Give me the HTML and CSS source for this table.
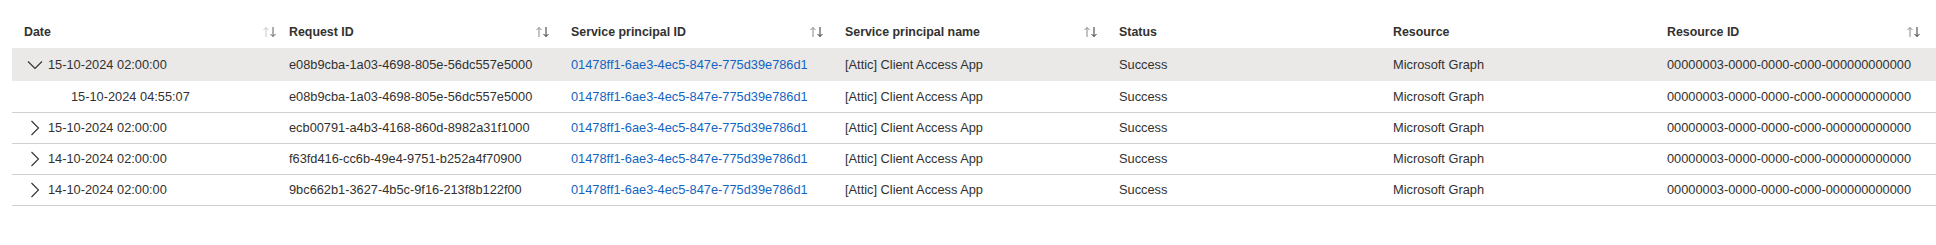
FILE: index.html
```html
<!DOCTYPE html>
<html lang="en">
<head>
    <meta charset="UTF-8">
    <title>Sign-in logs</title>
    <link rel="stylesheet" href="styles.css">
</head>
<body>
    <div class="grid-wrap">
        <table class="log-grid">
            <colgroup>
                <col class="col-date">
                <col class="col-request">
                <col class="col-fixed">
                <col class="col-fixed">
                <col class="col-fixed">
                <col class="col-fixed">
                <col>
            </colgroup>
            <thead>
                <tr>
                    <th class="first"><div class="head">Date<svg class="sort-icon faded" viewBox="0 0 16 12"><path d="M4 11V1.5M1.5 4L4 1.5 6.5 4"/><path class="down" d="M11 1v9.5M8.5 8L11 10.5 13.5 8"/></svg></div></th>
                    <th class="narrow"><div class="head">Request ID<svg class="sort-icon" viewBox="0 0 16 12"><path d="M4 11V1.5M1.5 4L4 1.5 6.5 4"/><path class="down" d="M11 1v9.5M8.5 8L11 10.5 13.5 8"/></svg></div></th>
                    <th><div class="head">Service principal ID<svg class="sort-icon" viewBox="0 0 16 12"><path d="M4 11V1.5M1.5 4L4 1.5 6.5 4"/><path class="down" d="M11 1v9.5M8.5 8L11 10.5 13.5 8"/></svg></div></th>
                    <th><div class="head">Service principal name<svg class="sort-icon" viewBox="0 0 16 12"><path d="M4 11V1.5M1.5 4L4 1.5 6.5 4"/><path class="down" d="M11 1v9.5M8.5 8L11 10.5 13.5 8"/></svg></div></th>
                    <th><div class="head">Status</div></th>
                    <th><div class="head">Resource</div></th>
                    <th class="last"><div class="head">Resource ID<svg class="sort-icon" viewBox="0 0 16 12"><path d="M4 11V1.5M1.5 4L4 1.5 6.5 4"/><path class="down" d="M11 1v9.5M8.5 8L11 10.5 13.5 8"/></svg></div></th>
                </tr>
            </thead>
            <tbody>
                <tr class="group open">
                    <td><span class="date-cell"><svg class="chevron" viewBox="0 0 16 16"><path d="M1 4.5l7 7 7-7"/></svg>15-10-2024 02:00:00</span></td>
                    <td class="narrow">e08b9cba-1a03-4698-805e-56dc557e5000</td>
                    <td><a href="#">01478ff1-6ae3-4ec5-847e-775d39e786d1</a></td>
                    <td>[Attic] Client Access App</td>
                    <td>Success</td>
                    <td>Microsoft Graph</td>
                    <td>00000003-0000-0000-c000-000000000000</td>
                </tr>
                <tr class="child">
                    <td><span class="date-cell indent">15-10-2024 04:55:07</span></td>
                    <td class="narrow">e08b9cba-1a03-4698-805e-56dc557e5000</td>
                    <td><a href="#">01478ff1-6ae3-4ec5-847e-775d39e786d1</a></td>
                    <td>[Attic] Client Access App</td>
                    <td>Success</td>
                    <td>Microsoft Graph</td>
                    <td>00000003-0000-0000-c000-000000000000</td>
                </tr>
                <tr class="group">
                    <td><span class="date-cell"><svg class="chevron" viewBox="0 0 16 16"><path d="M4.5 1l7 7-7 7"/></svg>15-10-2024 02:00:00</span></td>
                    <td class="narrow">ecb00791-a4b3-4168-860d-8982a31f1000</td>
                    <td><a href="#">01478ff1-6ae3-4ec5-847e-775d39e786d1</a></td>
                    <td>[Attic] Client Access App</td>
                    <td>Success</td>
                    <td>Microsoft Graph</td>
                    <td>00000003-0000-0000-c000-000000000000</td>
                </tr>
                <tr class="group">
                    <td><span class="date-cell"><svg class="chevron" viewBox="0 0 16 16"><path d="M4.5 1l7 7-7 7"/></svg>14-10-2024 02:00:00</span></td>
                    <td class="narrow">f63fd416-cc6b-49e4-9751-b252a4f70900</td>
                    <td><a href="#">01478ff1-6ae3-4ec5-847e-775d39e786d1</a></td>
                    <td>[Attic] Client Access App</td>
                    <td>Success</td>
                    <td>Microsoft Graph</td>
                    <td>00000003-0000-0000-c000-000000000000</td>
                </tr>
                <tr class="group">
                    <td><span class="date-cell"><svg class="chevron" viewBox="0 0 16 16"><path d="M4.5 1l7 7-7 7"/></svg>14-10-2024 02:00:00</span></td>
                    <td class="narrow">9bc662b1-3627-4b5c-9f16-213f8b122f00</td>
                    <td><a href="#">01478ff1-6ae3-4ec5-847e-775d39e786d1</a></td>
                    <td>[Attic] Client Access App</td>
                    <td>Success</td>
                    <td>Microsoft Graph</td>
                    <td>00000003-0000-0000-c000-000000000000</td>
                </tr>
            </tbody>
        </table>
    </div>
</body>
</html>
```

FILE: styles.css
```css
* {
    margin: 0;
    padding: 0;
    box-sizing: border-box;
}

body {
    font-family: 'Liberation Sans', Arial, sans-serif;
    font-size: 12.8px;
    color: #323130;
    background: #fff;
}

.grid-wrap {
    padding: 16px 0 0 12px;
}

.log-grid {
    width: 100%;
    table-layout: fixed;
    border-collapse: collapse;
}

.col-date {
    width: 268px;
}

.col-request {
    width: 279px;
}

.col-fixed {
    width: 274px;
}

th {
    height: 32px;
    padding: 0 8px 0 12px;
    font-size: 12.4px;
    font-weight: 700;
    text-align: left;
    white-space: nowrap;
}

th.first {
    padding-right: 2px;
}

th.last {
    padding-right: 14px;
}

.head {
    display: flex;
    align-items: center;
    justify-content: space-between;
}

.sort-icon {
    width: 16px;
    height: 12px;
    fill: none;
    stroke: #8a8886;
    stroke-width: 1;
}

.sort-icon .down {
    stroke: #323130;
}

.sort-icon.faded {
    stroke: #c8c6c4;
}

.sort-icon.faded .down {
    stroke: #605e5c;
}

td {
    height: 31px;
    padding: 0 10px 0 12px;
    white-space: nowrap;
    overflow: hidden;
    border-bottom: 1px solid #d2d0ce;
}

th.narrow,
td.narrow {
    padding-left: 9px;
}

tr.group.open td {
    height: 33px;
    background: #eae9e8;
    border-bottom: none;
}

a {
    color: #1464c0;
    text-decoration: none;
}

.date-cell {
    display: flex;
    align-items: center;
    padding-left: 3px;
}

.date-cell.indent {
    padding-left: 47px;
}

.chevron {
    width: 16px;
    height: 16px;
    margin-right: 5px;
    fill: none;
    stroke: #323130;
    stroke-width: 1.1;
}
```
